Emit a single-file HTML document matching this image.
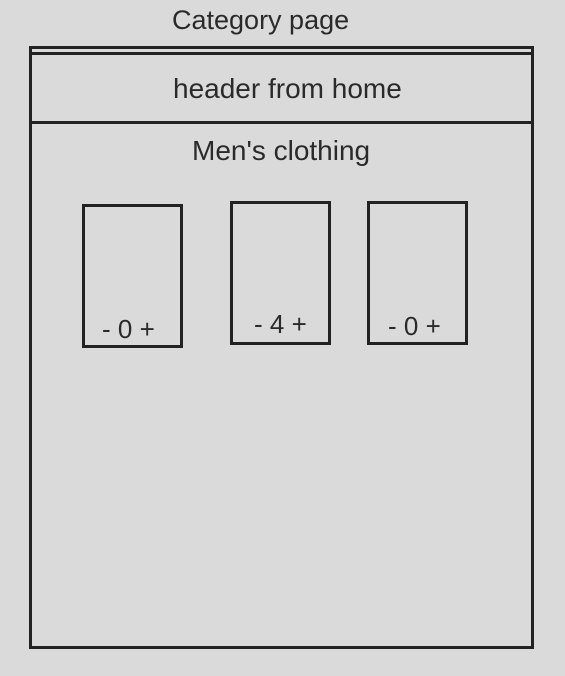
<!DOCTYPE html>
<html><head><style>
body{margin:0;width:565px;height:676px;background:#dadada;position:relative;overflow:hidden;font-family:"Liberation Sans",sans-serif;color:#2a2a2a}
.t{position:absolute;white-space:nowrap;font-size:26px}
.b{position:absolute;border:3px solid #222;box-sizing:border-box}
</style></head><body>
<div class="t" style="left:172px;top:5px;font-size:27px">Category page</div>
<div class="b" style="left:29px;top:46px;width:505px;height:603px"></div>
<div class="b" style="left:29px;top:52px;width:505px;height:72px"></div>
<div class="t" style="left:173px;top:73px;font-size:28px">header from home</div>
<div class="t" style="left:192px;top:135px;font-size:28px">Men's clothing</div>
<div class="b" style="left:82px;top:204px;width:101px;height:144px"></div>
<div class="b" style="left:230px;top:201px;width:101px;height:144px"></div>
<div class="b" style="left:367px;top:201px;width:101px;height:144px"></div>
<div class="t" style="left:102px;top:314px">- 0 +</div>
<div class="t" style="left:254px;top:309px">- 4 +</div>
<div class="t" style="left:388px;top:311px">- 0 +</div>
</body></html>
